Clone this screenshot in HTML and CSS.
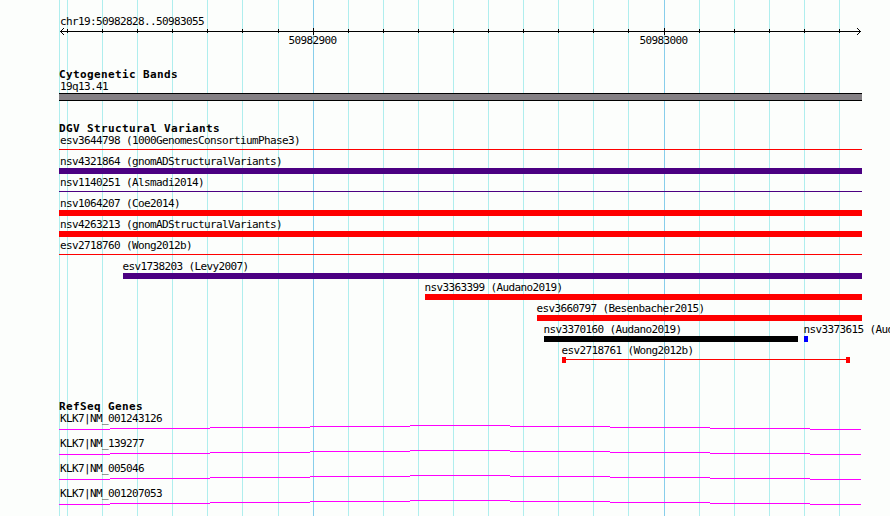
FILE: index.html
```html
<!DOCTYPE html>
<html lang="en">
<head>
    <meta charset="UTF-8">
    <title>chr19:50982828..50983055</title>
    <link rel="stylesheet" href="styles.css">
</head>
<body>
    <svg class="grid" width="890" height="516" shape-rendering="crispEdges">
        <path class="minor" d="M59.5 0V516M67.5 0V516M102.5 0V516M137.5 0V516M172.5 0V516M207.5 0V516M242.5 0V516M278.5 0V516M348.5 0V516M383.5 0V516M418.5 0V516M453.5 0V516M488.5 0V516M523.5 0V516M558.5 0V516M593.5 0V516M628.5 0V516M699.5 0V516M734.5 0V516M769.5 0V516M804.5 0V516M839.5 0V516"/>
        <path class="major" d="M313.5 0V516M664.5 0V516"/>
    </svg>

    <div class="browser">
        <div class="ruler">
            <div class="label">chr19:50982828..50983055</div>
            <svg class="axis" width="803" height="21">
                <path shape-rendering="crispEdges" d="M1 4.5H802M8.5 2V6M43.5 2V6M78.5 2V6M113.5 2V6M148.5 2V6M183.5 2V6M219.5 2V6M254.5 1V8M289.5 2V6M324.5 2V6M359.5 2V6M394.5 2V6M429.5 2V6M464.5 2V6M499.5 2V6M534.5 2V6M569.5 2V6M605.5 1V8M640.5 2V6M675.5 2V6M710.5 2V6M745.5 2V6M780.5 2V6"/>
                <path d="M5 1L1.5 4.5L5 8M798 1L801.5 4.5L798 8"/>
                <text x="229.5" y="17">50982900</text>
                <text x="580.5" y="17">50983000</text>
            </svg>
        </div>

        <div class="track cytobands">
            <div class="title">Cytogenetic Bands</div>
            <div class="label">19q13.41</div>
            <div class="band"></div>
        </div>

        <div class="track variants">
            <div class="title">DGV Structural Variants</div>
            <div class="row"><div class="feature edge red thin"><div class="label">esv3644798 (1000GenomesConsortiumPhase3)</div><div class="bar"></div></div></div>
            <div class="row"><div class="feature edge indigo"><div class="label">nsv4321864 (gnomADStructuralVariants)</div><div class="bar"></div></div></div>
            <div class="row"><div class="feature edge indigo thin"><div class="label">nsv1140251 (Alsmadi2014)</div><div class="bar"></div></div></div>
            <div class="row"><div class="feature edge red"><div class="label">nsv1064207 (Coe2014)</div><div class="bar"></div></div></div>
            <div class="row"><div class="feature edge red"><div class="label">nsv4263213 (gnomADStructuralVariants)</div><div class="bar"></div></div></div>
            <div class="row"><div class="feature edge red thin"><div class="label">esv2718760 (Wong2012b)</div><div class="bar"></div></div></div>
            <div class="row"><div class="feature indigo" style="margin-left: 64px; width: 739px"><div class="label">esv1738203 (Levy2007)</div><div class="bar"></div></div></div>
            <div class="row"><div class="feature red" style="margin-left: 366px; width: 437px"><div class="label">nsv3363399 (Audano2019)</div><div class="bar"></div></div></div>
            <div class="row"><div class="feature red" style="margin-left: 478px; width: 325px"><div class="label">esv3660797 (Besenbacher2015)</div><div class="bar"></div></div></div>
            <div class="row">
                <div class="feature black" style="margin-left: 485px; width: 254px"><div class="label">nsv3370160 (Audano2019)</div><div class="bar"></div></div>
                <div class="feature blue" style="margin-left: 6px; width: 4px"><div class="label">nsv3373615 (Audano2019)</div><div class="bar"></div></div>
            </div>
            <div class="row"><div class="feature red thin capped" style="margin-left: 503px; width: 288px"><div class="label">esv2718761 (Wong2012b)</div><div class="bar"></div></div></div>
        </div>

        <div class="track genes">
            <div class="title">RefSeq Genes</div>
            <div class="gene">
                <div class="label">KLK7|NM_001243126</div>
                <svg class="intron" width="802" height="5"><use href="#intron"/></svg>
            </div>
            <div class="gene">
                <div class="label">KLK7|NM_139277</div>
                <svg class="intron" width="802" height="5"><use href="#intron"/></svg>
            </div>
            <div class="gene">
                <div class="label">KLK7|NM_005046</div>
                <svg class="intron" width="802" height="5"><use href="#intron"/></svg>
            </div>
            <div class="gene">
                <div class="label">KLK7|NM_001207053</div>
                <svg class="intron" width="802" height="5"><use href="#intron"/></svg>
            </div>
        </div>
    </div>

    <svg class="defs" width="0" height="0">
        <defs>
            <path id="intron" shape-rendering="crispEdges" d="M0 4.5H51M51 3.5H151M151 2.5H251M251 1.5H351M351 .5H451M451 1.5H551M551 2.5H651M651 3.5H751M751 4.5H802"/>
        </defs>
    </svg>
</body>
</html>
```

FILE: styles.css
```css
body {
    margin: 0;
    height: 516px;
    overflow: hidden;
    background: #fcfefc;
    color: #000;
    font-family: "DejaVu Sans Mono", monospace;
    font-size: 11px;
}
svg {
    display: block;
    fill: none;
}
/* scale lines run behind every track */
.grid {
    position: absolute;
    top: 0;
    left: 0;
    z-index: -1;
}
.minor {
    stroke: #afeeee;
}
.major {
    stroke: #87ceeb;
}
.browser {
    padding: 13px 0 0 59px;
}
.label {
    height: 15px;
    padding-left: 1px;
    line-height: 18px;
    letter-spacing: -0.622px;
    white-space: nowrap;
}
.title {
    height: 12px;
    line-height: 18px;
    font-weight: bold;
    letter-spacing: 0.378px;
}
.ruler .label {
    height: 14px;
}
.axis {
    stroke: #000;
}
.axis text {
    fill: #000;
    stroke: none;
    letter-spacing: -0.622px;
}
.cytobands {
    margin-top: 18px;
}
.band {
    box-sizing: border-box;
    width: 803px;
    height: 8px;
    background: #848084;
    border: solid #000;
    border-width: 1px 0;
}
.variants {
    margin-top: 19px;
}
.row {
    display: flex;
}
.feature .label {
    padding: 0;
    margin-left: -0.5px;
}
.feature.edge {
    width: 803px;
}
.feature.edge .label {
    margin-left: 1px;
}
.bar {
    height: 6px;
}
.red .bar {
    background: #f00;
}
.indigo .bar {
    background: #4b0082;
}
.black .bar {
    background: #000;
}
.blue .bar {
    background: #00f;
}
.thin .bar {
    height: 1px;
    margin: 2px 0 3px;
}
.capped .bar {
    box-sizing: border-box;
    height: 6px;
    margin: 0;
    border: solid #f00;
    border-width: 0 4px;
    background: linear-gradient(#f00, #f00) 0 2px / 100% 1px no-repeat;
}
.genes {
    margin-top: 35px;
}
.gene {
    height: 25px;
}
.intron {
    stroke: #f0f;
}
.defs {
    position: absolute;
}
```
